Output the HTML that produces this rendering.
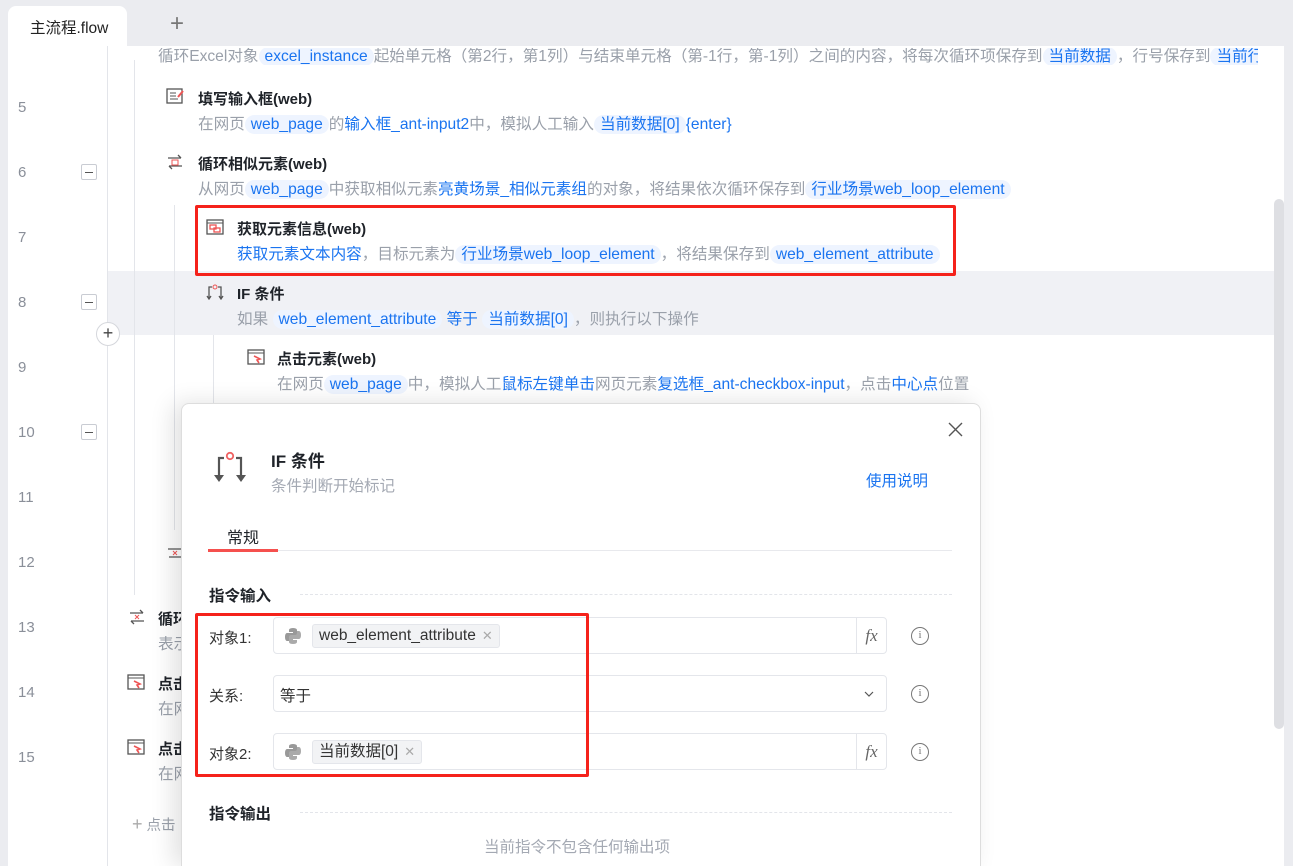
<!DOCTYPE html>
<html><head><meta charset="utf-8"><style>
*{margin:0;padding:0;box-sizing:border-box}
html,body{width:1293px;height:866px;overflow:hidden}
body{background:#ebecf0;font-family:"Liberation Sans","Noto Sans CJK SC",sans-serif;position:relative;color:#1f2329}
.a{position:absolute;white-space:nowrap}
.main{position:absolute;left:8px;top:46px;width:1276px;height:820px;background:#fff}
.num{position:absolute;left:18px;font-size:15px;color:#8a8f99}
.col{position:absolute;width:1px;background:#e3e5ea}
.t{position:absolute;font-size:15px;font-weight:bold;color:#1f2329;white-space:nowrap}
.d{position:absolute;font-size:15.6px;color:#9aa0aa;white-space:nowrap}
.b{color:#1a74f0}
.c{color:#1a74f0;background:#eef4ff;border-radius:11px;padding:1px 6px}
.mi{position:absolute;width:16px;height:16px;border:1px solid #c9ccd3;border-radius:2px;background:#fff}
.mi:after{content:"";position:absolute;left:3px;top:7px;width:8px;height:1px;background:#555}
.ic{position:absolute;width:18px;height:16px}
.modal{position:absolute;left:181px;top:403px;width:800px;height:463px;background:#fff;border-radius:8px 8px 0 0;border:1px solid #ddd;border-bottom:none;box-shadow:-8px 0 24px rgba(0,0,0,.12)}
.lbl{position:absolute;left:27px;font-size:15px;color:#333}
.inp{position:absolute;left:91px;width:614px;height:37px;border:1px solid #e4e6eb;border-radius:4px}
.tag{position:absolute;left:38px;top:6px;height:24px;background:#f2f3f5;border:1px solid #e4e6eb;border-radius:3px;font-size:15.5px;padding:0 6px;line-height:22px;color:#333}
.tag span{color:#aaa;font-size:13px;margin-left:6px}
.fx{position:absolute;right:0;top:0;width:30px;height:35px;border-left:1px solid #e4e6eb;font-style:italic;font-family:"Liberation Serif",serif;font-size:17px;color:#666;text-align:center;line-height:35px}
.info{position:absolute;left:729px;width:18px;height:18px;border:1.5px solid #777;border-radius:50%;font-size:11px;color:#777;text-align:center;line-height:15px;font-family:"Liberation Serif",serif}
.py{position:absolute;left:10px;top:9px;width:18px;height:18px}
</style></head><body>
<div class="a" style="left:8px;top:6px;width:119px;height:40px;background:#fff;border-radius:8px 8px 0 0"></div>
<div class="a" style="left:30px;top:16px;font-size:15.5px;color:#222">主流程.flow</div>
<div class="a" style="left:170px;top:10px;font-size:24px;color:#777;font-weight:300">+</div>
<div class="main"></div>
<div class="a" style="left:1274px;top:199px;width:10px;height:530px;background:#dedfe3;border-radius:5px"></div>
<div class="a" style="left:108px;top:271px;width:1166px;height:64px;background:#f0f1f5"></div>
<div class="col" style="left:107px;top:46px;height:820px"></div>
<div class="col" style="left:134px;top:60px;height:535px"></div>
<div class="col" style="left:174px;top:205px;height:325px"></div>
<div class="col" style="left:213px;top:335px;height:70px"></div>
<div class="num" style="top:99px">5</div><div class="num" style="top:164px">6</div><div class="num" style="top:229px">7</div><div class="num" style="top:294px">8</div><div class="num" style="top:359px">9</div><div class="num" style="top:424px">10</div><div class="num" style="top:489px">11</div><div class="num" style="top:554px">12</div><div class="num" style="top:619px">13</div><div class="num" style="top:684px">14</div><div class="num" style="top:749px">15</div>
<div class="mi" style="left:81px;top:164px"></div><div class="mi" style="left:81px;top:294px"></div><div class="mi" style="left:81px;top:424px"></div>
<div class="a" style="left:96px;top:322px;width:24px;height:24px;border:1px solid #d5d7dc;border-radius:50%;background:#fff;text-align:center;line-height:21px;font-size:18px;color:#444">+</div>
<div class="d" style="left:158px;top:48px;height:17px;overflow:hidden;width:1100px"><div style="margin-top:-4px">循环Excel对象<span class="c">excel_instance</span>起始单元格（第2行，第1列）与结束单元格（第-1行，第-1列）之间的内容，将每次循环项保存到<span class="c">当前数据</span>，行号保存到<span class="c">当前行</span></div></div>
<svg class="ic" style="left:166px;top:88px" viewBox="0 0 18 16"><rect x="1" y="1" width="15" height="14" fill="none" stroke="#555" stroke-width="1.3"/><path d="M4 5h6M4 8h6M4 11h8" stroke="#555"/><path d="M12 9l5-6" stroke="#e55" stroke-width="2"/></svg>
<div class="t" style="left:198px;top:88px">填写输入框(web)</div>
<div class="d" style="left:198px;top:112px">在网页<span class="c">web_page</span>的<span class="b">输入框_ant-input2</span>中，模拟人工输入<span class="c">当前数据[0]</span><span class="b">{enter}</span></div>
<svg class="ic" style="left:166px;top:154px" viewBox="0 0 18 16"><path d="M2 4h13M12 1l3 3M16 12H3M6 15l-3-3" stroke="#555" stroke-width="1.3" fill="none"/><rect x="6" y="6" width="6" height="5" fill="none" stroke="#e55"/></svg>
<div class="t" style="left:198px;top:153px">循环相似元素(web)</div>
<div class="d" style="left:198px;top:177px">从网页<span class="c">web_page</span>中获取相似元素<span class="b">亮黄场景_相似元素组</span>的对象，将结果依次循环保存到<span class="c">行业场景web_loop_element</span></div>
<svg class="ic" style="left:206px;top:219px" viewBox="0 0 18 16"><rect x="1" y="1" width="16" height="14" fill="#fff" stroke="#555" stroke-width="1.3"/><path d="M1 4h16" stroke="#555"/><rect x="4" y="6" width="6" height="4" fill="none" stroke="#e55" stroke-width="1.3"/><rect x="8" y="9" width="6" height="4" fill="none" stroke="#e55" stroke-width="1.3"/></svg>
<div class="t" style="left:237px;top:218px">获取元素信息(web)</div>
<div class="d" style="left:237px;top:242px"><span class="b">获取元素文本内容</span>，目标元素为<span class="c">行业场景web_loop_element</span>，将结果保存到<span class="c">web_element_attribute</span></div>
<div class="a" style="left:195px;top:205px;width:761px;height:71px;border:3px solid #f5221b;border-radius:2px"></div>
<svg class="ic" style="left:206px;top:284px" viewBox="0 0 18 16"><path d="M3 14V3h3M15 14V3h-3M1 12l2 3 2-3M13 12l2 3 2-3" stroke="#555" stroke-width="1.3" fill="none"/><circle cx="9" cy="3" r="2" fill="none" stroke="#e55"/></svg>
<div class="t" style="left:237px;top:283px">IF 条件</div>
<div class="d" style="left:237px;top:307px">如果 <span class="c">web_element_attribute</span> <span class="b">等于</span> <span class="c">当前数据[0]</span>，则执行以下操作</div>
<svg class="ic" style="left:247px;top:349px" viewBox="0 0 18 16"><rect x="1" y="1" width="16" height="14" fill="#fff" stroke="#555" stroke-width="1.3"/><path d="M1 4h16" stroke="#555"/><path d="M7 7l6 3-3 1 2 3" stroke="#e55" stroke-width="1.6" fill="none"/></svg>
<div class="t" style="left:277px;top:348px">点击元素(web)</div>
<div class="d" style="left:277px;top:372px">在网页<span class="c">web_page</span>中，模拟人工<span class="b">鼠标左键单击</span>网页元素<span class="b">复选框_ant-checkbox-input</span>，点击<span class="b">中心点</span>位置</div>
<svg class="ic" style="left:166px;top:545px" viewBox="0 0 18 16"><path d="M2 4h13M16 12H3" stroke="#555" stroke-width="1.3"/><path d="M7 6l4 4M11 6l-4 4" stroke="#e55"/></svg>
<svg class="ic" style="left:128px;top:609px" viewBox="0 0 18 16"><path d="M2 4h13M12 1l3 3M16 12H3M6 15l-3-3" stroke="#555" stroke-width="1.3" fill="none"/><path d="M7 6l4 4M11 6l-4 4" stroke="#e55"/></svg>
<div class="t" style="left:158px;top:608px">循环</div><div class="d" style="left:158px;top:632px">表示</div>
<svg class="ic" style="left:127px;top:674px" viewBox="0 0 18 16"><rect x="1" y="1" width="16" height="14" fill="#fff" stroke="#555" stroke-width="1.3"/><path d="M1 4h16" stroke="#555"/><path d="M7 7l6 3-3 1 2 3" stroke="#e55" stroke-width="1.6" fill="none"/></svg>
<div class="t" style="left:158px;top:673px">点击</div><div class="d" style="left:158px;top:697px">在网</div>
<svg class="ic" style="left:127px;top:739px" viewBox="0 0 18 16"><rect x="1" y="1" width="16" height="14" fill="#fff" stroke="#555" stroke-width="1.3"/><path d="M1 4h16" stroke="#555"/><path d="M7 7l6 3-3 1 2 3" stroke="#e55" stroke-width="1.6" fill="none"/></svg>
<div class="t" style="left:158px;top:738px">点击</div><div class="d" style="left:158px;top:762px">在网</div>
<div class="d" style="left:132px;top:814px;font-size:14.5px"><span style="font-size:18px;color:#aaa">+</span> 点击</div>
<div class="modal">
<svg class="a" style="left:766px;top:18px" width="15" height="15" viewBox="0 0 15 15"><path d="M1 1l13 13M14 1L1 14" stroke="#555" stroke-width="1.4"/></svg>
<svg class="a" style="left:30px;top:45px" width="38" height="36" viewBox="0 0 38 36"><path d="M7 30V9h5M29 30V9h-5" stroke="#555" stroke-width="2.2" fill="none"/><path d="M2 26l5 7 5-7zM24 26l5 7 5-7z" fill="#555"/><circle cx="18" cy="7" r="3.2" fill="none" stroke="#f06262" stroke-width="1.8"/></svg>
<div class="a" style="left:89px;top:43px;font-size:17px;font-weight:bold;color:#1f2329">IF 条件</div>
<div class="a" style="left:89px;top:70px;font-size:15.5px;color:#a4a9b3">条件判断开始标记</div>
<div class="a" style="left:684px;top:65px;font-size:15.5px;color:#1a74f0">使用说明</div>
<div class="a" style="left:45px;top:120px;font-size:16px;color:#1f2329">常规</div>
<div class="a" style="left:26px;top:146px;width:744px;height:1px;background:#e8e9ed"></div>
<div class="a" style="left:26px;top:145px;width:70px;height:3px;background:#f5504e"></div>
<div class="a" style="left:27px;top:180px;font-size:15.5px;font-weight:bold">指令输入</div>
<div class="a" style="left:118px;top:190px;width:652px;border-top:1px dashed #e3e5ea"></div>
<div class="lbl" style="top:223px">对象1:</div>
<div class="inp" style="top:213px"><svg class="py" viewBox="0 0 18 18"><path d="M9 1C5 1 5 3 5 3v2h4v1H3S1 6 1 10s2 4 2 4h2v-2s0-2 2-2h4s2 0 2-2V3s0-2-4-2z" fill="#999"/><path d="M9 17c4 0 4-2 4-2v-2H9v-1h6s2 0 2-4-2-4-2-4h-2v2s0 2-2 2H7s-2 0-2 2v5s0 2 4 2z" fill="#aaa"/></svg><div class="tag">web_element_attribute<span>✕</span></div><div class="fx">fx</div></div>
<div class="info" style="top:223px">i</div>
<div class="lbl" style="top:281px">关系:</div>
<div class="inp" style="top:271px"><div class="a" style="left:6px;top:8px;font-size:15.5px;color:#333">等于</div><svg class="a" style="right:12px;top:15px" width="10" height="6" viewBox="0 0 10 6"><path d="M1 1l4 4 4-4" stroke="#555" fill="none" stroke-width="1.2"/></svg></div>
<div class="info" style="top:281px">i</div>
<div class="lbl" style="top:339px">对象2:</div>
<div class="inp" style="top:329px"><svg class="py" viewBox="0 0 18 18"><path d="M9 1C5 1 5 3 5 3v2h4v1H3S1 6 1 10s2 4 2 4h2v-2s0-2 2-2h4s2 0 2-2V3s0-2-4-2z" fill="#999"/><path d="M9 17c4 0 4-2 4-2v-2H9v-1h6s2 0 2-4-2-4-2-4h-2v2s0 2-2 2H7s-2 0-2 2v5s0 2 4 2z" fill="#aaa"/></svg><div class="tag">当前数据[0]<span>✕</span></div><div class="fx">fx</div></div>
<div class="info" style="top:339px">i</div>
<div class="a" style="left:13px;top:209px;width:394px;height:164px;border:3px solid #f5221b;border-radius:2px"></div>
<div class="a" style="left:27px;top:398px;font-size:15.5px;font-weight:bold">指令输出</div>
<div class="a" style="left:118px;top:408px;width:652px;border-top:1px dashed #e3e5ea"></div>
<div class="a" style="left:302px;top:431px;font-size:15.5px;color:#a4a9b3">当前指令不包含任何输出项</div>
</div>
</body></html>
